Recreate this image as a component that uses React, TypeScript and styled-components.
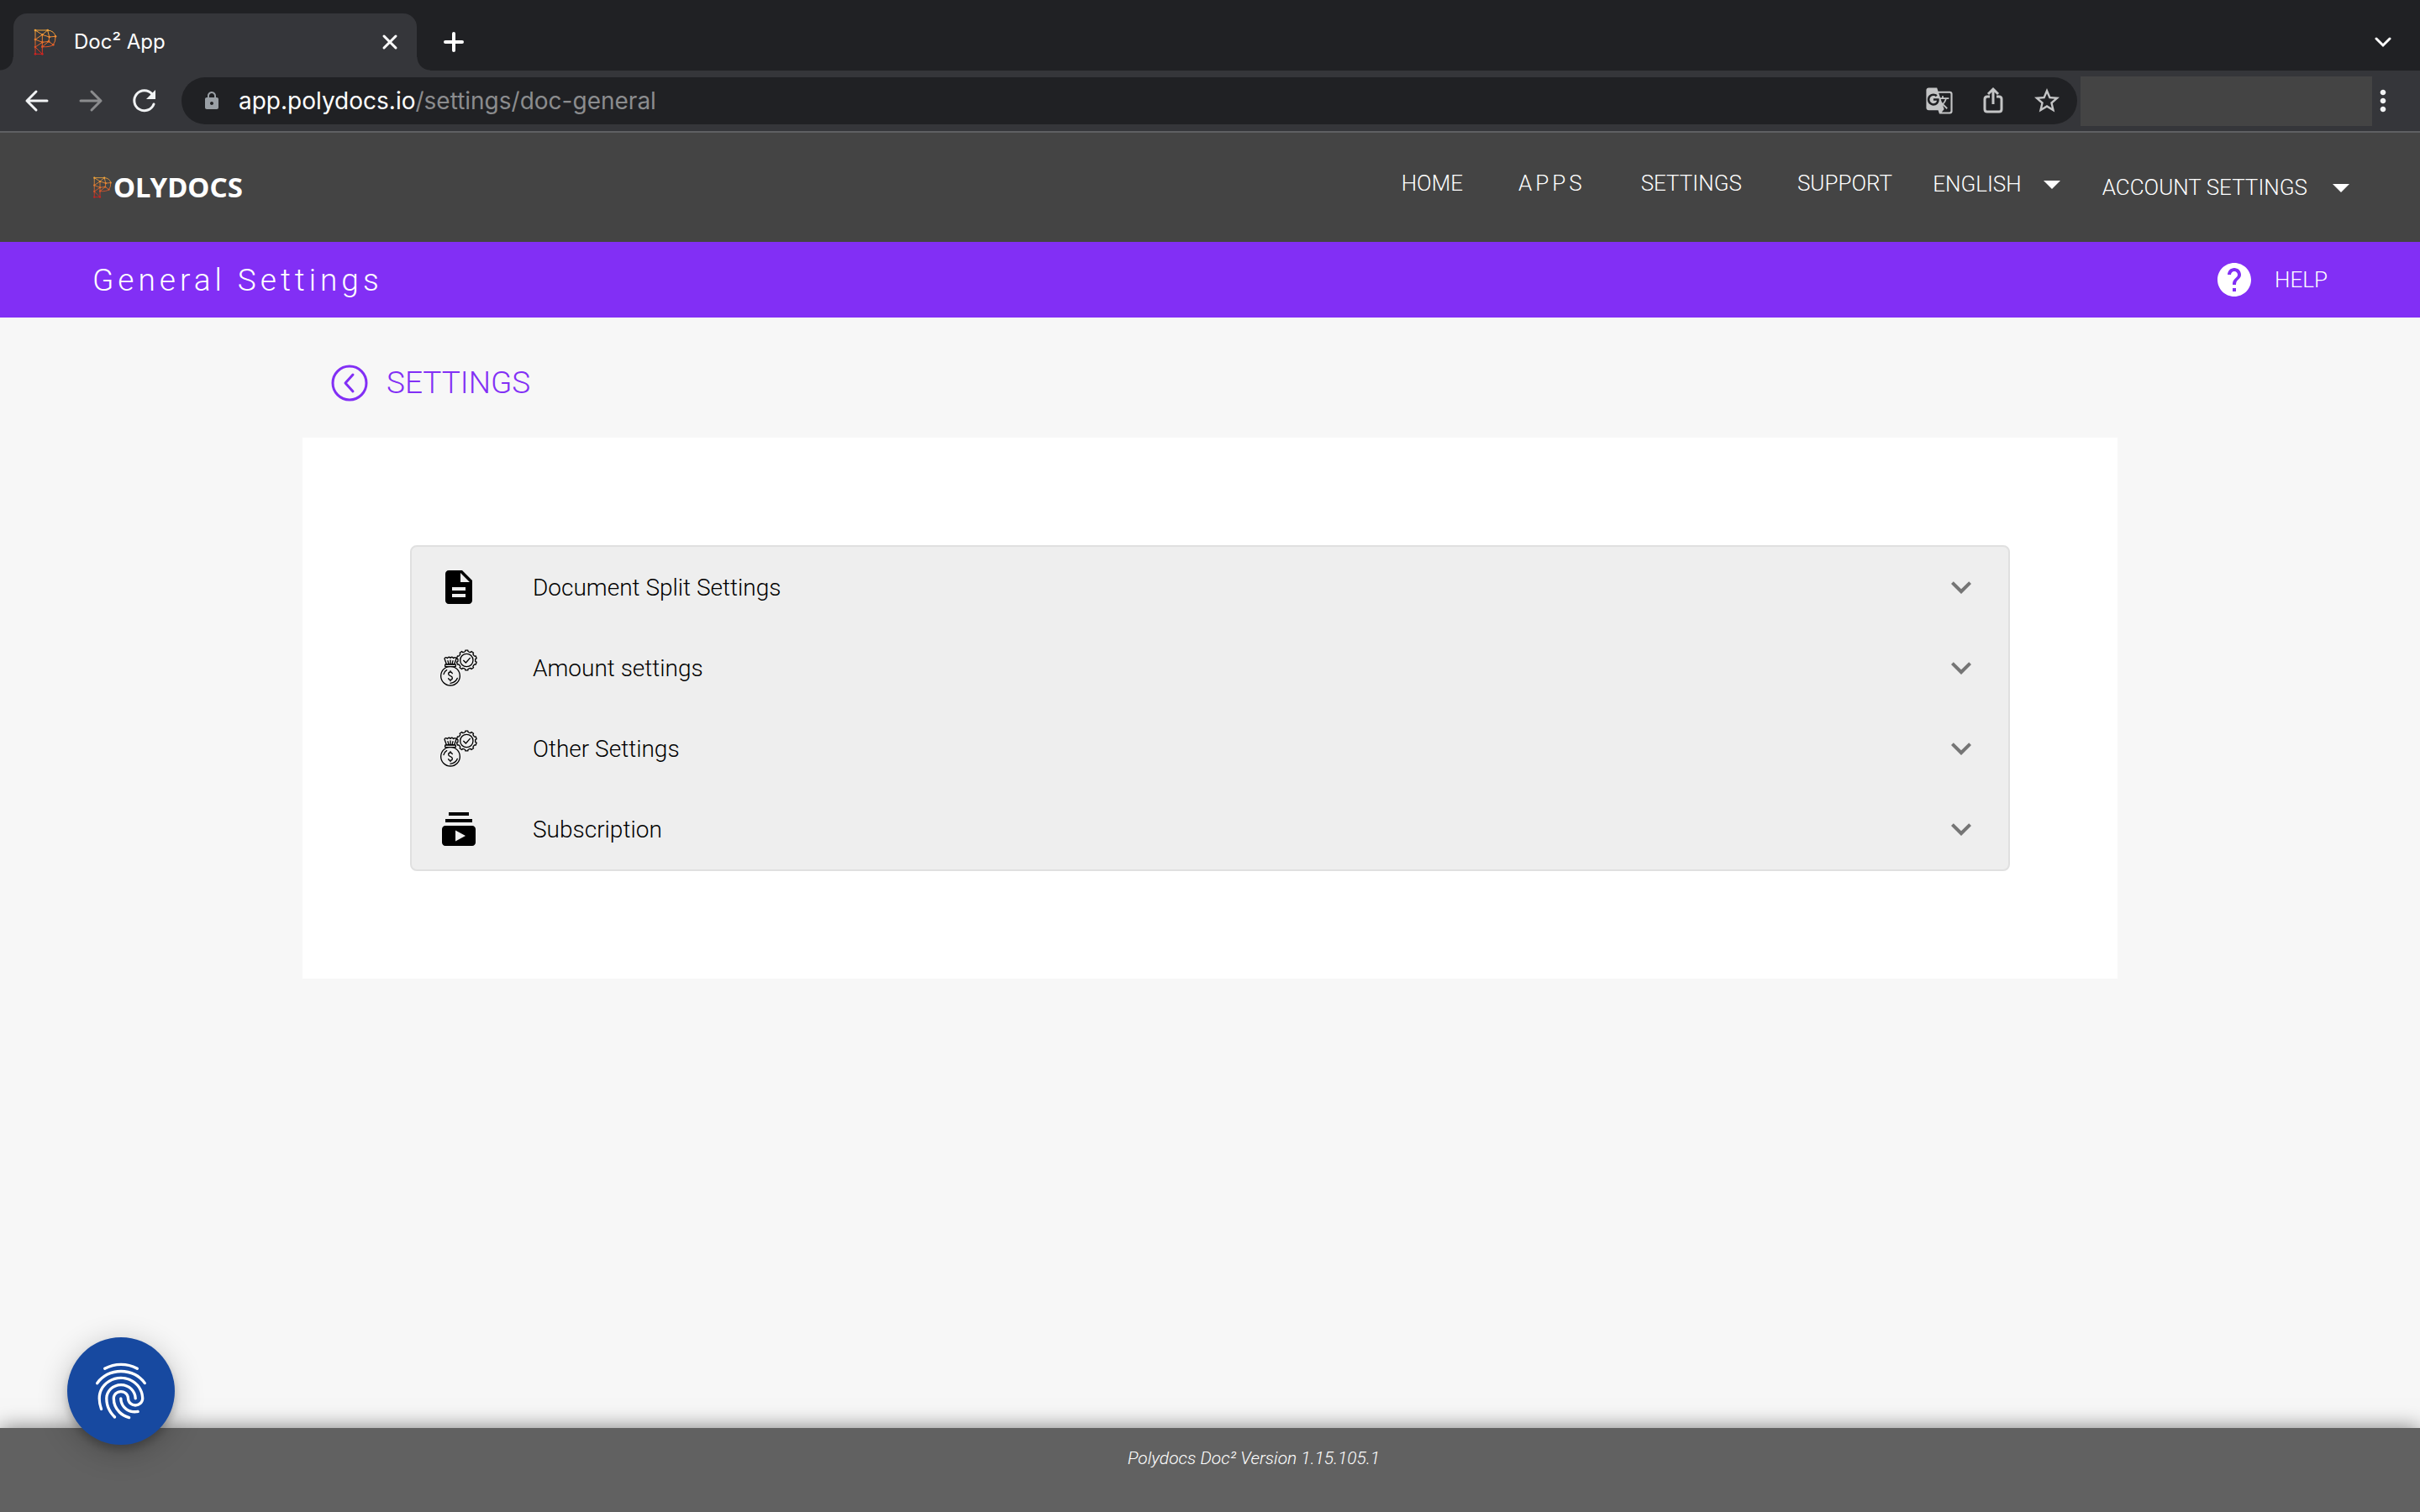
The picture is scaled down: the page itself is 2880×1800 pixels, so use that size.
import React from "react";
import styled, { createGlobalStyle } from "styled-components";
import {
  MdArrowDropDown,
  MdDescription,
  MdExpandMore,
  MdFingerprint,
  MdGTranslate,
  MdHelp,
  MdLock,
  MdMoreVert,
  MdStarBorder,
  MdSubscriptions,
} from "react-icons/md";

const uiFont = '"Inter", "Liberation Sans", sans-serif';
const brandFont = '"Noto Sans", "Open Sans", sans-serif';
const bodyFont = '"Roboto", "Liberation Sans", sans-serif';

const GlobalStyle = createGlobalStyle`
  *, *::before, *::after { box-sizing: border-box; }
  body { margin: 0; background: #f7f7f7; font-family: ${bodyFont}; }
  button { margin: 0; padding: 0; border: 0; background: none; color: inherit; font: inherit; cursor: pointer; }
  a { color: inherit; text-decoration: none; }
  h1, h2, p, ul { margin: 0; padding: 0; font-weight: inherit; }
  ul { list-style: none; }
  svg { display: block; flex: none; }
`;

const Page = styled.div`
  min-height: 100vh;
  display: flex;
  flex-direction: column;
`;

/* Browser frame */

const TabStrip = styled.div`
  height: 84px;
  padding: 16px 16px 0;
  display: flex;
  align-items: stretch;
  background: #202124;
  color: #fff;
  font-family: ${uiFont};
`;

const Tab = styled.div`
  position: relative;
  width: 480px;
  padding: 0 22px 0 24px;
  display: flex;
  align-items: center;
  border-radius: 16px 16px 0 0;
  background: #35363a;
  font-size: 24px;
  line-height: 32px;

  &::before,
  &::after {
    content: "";
    position: absolute;
    bottom: 0;
    width: 16px;
    height: 16px;
  }
  &::before {
    right: 100%;
    background: radial-gradient(circle at 0 0, transparent 15px, #35363a 16px);
  }
  &::after {
    left: 100%;
    background: radial-gradient(circle at 100% 0, transparent 15px, #35363a 16px);
  }
`;

const TabTitle = styled.span`
  flex: 1;
  margin-left: 20px;
`;

const StripButton = styled.button<{ $end?: boolean }>`
  display: flex;
  align-items: center;
  margin-left: ${(p) => (p.$end ? "auto" : "30px")};
  padding-right: ${(p) => (p.$end ? "18px" : "0")};
`;

const Toolbar = styled.div`
  height: 74px;
  padding: 0 31px 0 28px;
  display: flex;
  align-items: center;
  background: #35363a;
  border-bottom: 2px solid #5f6063;
  color: #f1f3f4;
  font-family: ${uiFont};
`;

const HistoryButtons = styled.div`
  display: flex;
  gap: 32px;
  margin-right: 28px;
`;

const AddressBar = styled.div`
  flex: 1;
  height: 56px;
  padding: 0 18px 0 24px;
  display: flex;
  align-items: center;
  border-radius: 28px;
  background: #202124;
  color: #9aa0a6;
`;

const Address = styled.span`
  flex: 1;
  margin-left: 20px;
  color: #8b8c8e;
  font-size: 28px;
  line-height: 36px;
  b {
    color: #fff;
    font-weight: 400;
  }
`;

const AddressActions = styled.div`
  display: flex;
  gap: 28px;
  color: #c4c5c6;
`;

const AddressAction = styled.button`
  width: 36px;
  height: 36px;
  display: flex;
  align-items: center;
  justify-content: center;
`;

const ExtensionArea = styled.div`
  width: 347px;
  height: 59px;
  margin-left: 4px;
  background: #444;
`;

const MenuButton = styled.button`
  width: 26px;
  display: flex;
  justify-content: center;
`;

/* Site header */

const Header = styled.header`
  height: 130px;
  padding: 0 70px 0 110px;
  display: flex;
  align-items: center;
  justify-content: space-between;
  background: #444;
  color: #fff;
`;

const Brand = styled.a`
  display: flex;
  align-items: center;
  gap: 1px;
  font-family: ${brandFont};
  font-size: 33px;
  font-weight: 700;
  line-height: 40px;
`;

const Nav = styled.nav`
  display: flex;
  align-items: center;
  font-size: 26px;
  font-weight: 300;
  line-height: 32px;
`;

const NavLinks = styled.ul`
  display: flex;
  gap: 66px;
  margin-right: 48px;
  padding-bottom: 10px;
`;

const NavLink = styled.a<{ $spaced?: boolean }>`
  letter-spacing: ${(p) => (p.$spaced ? "4px" : "normal")};
`;

const NavMenu = styled.button<{ $raised?: boolean }>`
  display: flex;
  align-items: center;
  gap: ${(p) => (p.$raised ? "12px" : "16px")};
  margin-right: ${(p) => (p.$raised ? "36px" : "0")};
  padding-bottom: ${(p) => (p.$raised ? "8px" : "0")};
`;

const TitleBar = styled.div`
  height: 90px;
  padding: 0 110px;
  display: flex;
  align-items: center;
  justify-content: space-between;
  background: #822ff5;
  color: #fff;
  font-weight: 300;
`;

const Title = styled.h1`
  padding-top: 2px;
  font-size: 37px;
  letter-spacing: 5px;
  line-height: 48px;
`;

const HelpLink = styled.a`
  display: flex;
  align-items: center;
  gap: 24px;
  font-size: 26px;
  line-height: 32px;
`;

/* Settings */

const Main = styled.main`
  flex: 1;
  width: 75%;
  margin: 0 auto;
`;

const BackLink = styled.a`
  height: 143px;
  padding: 12px 32px 0;
  display: flex;
  align-items: center;
  gap: 20px;
  color: #822ff5;
  font-size: 37px;
  font-weight: 300;
  line-height: 48px;
`;

const Card = styled.section`
  padding: 128px;
  background: #fff;
`;

const SettingsList = styled.ul`
  border: 2px solid #e0e0e0;
  border-radius: 8px;
  background: #eee;
`;

const SettingsRow = styled.button`
  width: 100%;
  height: 96px;
  padding: 0 32px;
  display: flex;
  align-items: center;
  font-size: 28px;
  font-weight: 300;
  line-height: 36px;
  text-align: left;
  color: #000;
`;

const RowLabel = styled.span`
  flex: 1;
  margin-left: 64px;
  padding-top: 2px;
`;

const RowChevron = styled(MdExpandMore)`
  color: #757575;
`;

/* Footer */

const Footer = styled.footer`
  height: 100px;
  padding: 20px 0 0 104px;
  background: #616161;
  box-shadow: 0 0 24px rgba(0, 0, 0, 0.5);
  color: #fff;
  font-size: 21px;
  font-style: italic;
  font-weight: 300;
  line-height: 32px;
  text-align: center;
`;

const FingerprintButton = styled.button`
  position: fixed;
  left: 80px;
  bottom: 80px;
  width: 128px;
  height: 128px;
  display: flex;
  align-items: center;
  justify-content: center;
  border-radius: 50%;
  background: #1749a0;
  box-shadow: 0 6px 10px rgba(0, 0, 0, 0.2), 0 8px 36px rgba(0, 0, 0, 0.24);
  color: #fff;
`;

/* Drawings */

const meshNodes = [
  [36, 36], [80, 36], [61, 52], [108, 58], [86, 60], [36, 69], [84, 76],
  [61, 79], [100, 88], [61, 95], [36, 96], [36, 121], [61, 121],
];

const MeshP = ({ width, height }: { width: number; height: number }) => (
  <svg width={width} height={height} viewBox="30 30 84 96" fill="none" aria-hidden="true">
    <defs>
      <linearGradient id="ember" x1="0" y1="34" x2="0" y2="122" gradientUnits="userSpaceOnUse">
        <stop offset="0" stopColor="#f5a83c" />
        <stop offset="0.5" stopColor="#e8732c" />
        <stop offset="1" stopColor="#d01f1f" />
      </linearGradient>
    </defs>
    <path
      stroke="url(#ember)"
      strokeWidth="3"
      d="M36 121V36H80Q104 38 108 58Q109 76 100 88Q88 97 61 95M36 36L61 52L80 36L86 60L108 58M61 52L86 60L84 76L100 88M84 76L61 79L36 69L61 52V121H36M61 95L84 76M61 79L36 96L61 121"
    />
    <g fill="url(#ember)">
      {meshNodes.map(([x, y]) => (
        <circle key={`${x}-${y}`} cx={x} cy={y} r="4" />
      ))}
    </g>
  </svg>
);

const CloseIcon = () => (
  <svg width="20" height="20" viewBox="0 0 20 20" stroke="currentColor" strokeWidth="3" strokeLinecap="round">
    <path d="M3 3L17 17M17 3L3 17" />
  </svg>
);

const PlusIcon = () => (
  <svg width="28" height="28" viewBox="0 0 28 28" stroke="currentColor" strokeWidth="4" strokeLinecap="round">
    <path d="M14 4V24M4 14H24" />
  </svg>
);

const TabListIcon = () => (
  <svg width="20" height="20" viewBox="0 0 20 20" fill="none" stroke="currentColor" strokeWidth="3" strokeLinecap="round">
    <path d="M2 6L10 14L18 6" />
  </svg>
);

const ArrowIcon = ({ forward }: { forward?: boolean }) => (
  <svg
    width="32"
    height="32"
    viewBox="0 0 32 32"
    fill="none"
    stroke={forward ? "#8b8c8e" : "currentColor"}
    strokeWidth="3"
    strokeLinecap="round"
    strokeLinejoin="round"
  >
    <path d={forward ? "M4 16H28M17 5L28 16L17 27" : "M28 16H4M15 5L4 16L15 27"} />
  </svg>
);

const ReloadIcon = () => (
  <svg width="32" height="32" viewBox="0 0 32 32" fill="none" stroke="currentColor" strokeWidth="3" strokeLinecap="round">
    <path d="M27 20A12 12 0 1 1 25 8" />
    <path d="M29 3V14H18Z" fill="currentColor" stroke="none" />
  </svg>
);

const ShareIcon = () => (
  <svg width="36" height="36" viewBox="0 0 36 36" fill="none" stroke="currentColor" strokeWidth="3">
    <path d="M14 13H11Q8 13 8 16V28Q8 31 11 31H25Q28 31 28 28V16Q28 13 25 13H22M18 22V5M12 10L18 4L24 10" />
  </svg>
);

const BackCircleIcon = () => (
  <svg
    width="48"
    height="48"
    viewBox="0 0 48 48"
    fill="none"
    stroke="currentColor"
    strokeWidth="3"
    strokeLinecap="round"
    strokeLinejoin="round"
  >
    <circle cx="24" cy="24" r="20" />
    <path d="M28 14L19 24L28 34" />
  </svg>
);

const gearPath = (() => {
  const points: string[] = [];
  const teeth = 10;
  for (let i = 0; i < teeth; i += 1) {
    [
      [-0.42, 31],
      [-0.25, 32],
      [-0.2, 36],
      [0.2, 36],
      [0.25, 32],
      [0.42, 31],
    ].forEach(([step, radius]) => {
      const angle = ((i + step) / teeth) * Math.PI * 2 - Math.PI / 2;
      points.push(`${(94 + radius * Math.cos(angle)).toFixed(1)} ${(40 + radius * Math.sin(angle)).toFixed(1)}`);
    });
  }
  return `M${points.join("L")}Z`;
})();

const MoneyBagIcon = () => (
  <svg
    width="48"
    height="48"
    viewBox="-6 -5 144 144"
    fill="none"
    stroke="#000"
    strokeWidth="4"
    strokeLinecap="round"
    strokeLinejoin="round"
  >
    <path d={gearPath} />
    <circle cx="94" cy="40" r="23" />
    <path d="M83 41L91 49L106 32" />
    <g fill="#eee">
      <circle cx="36" cy="96" r="34" />
      <path d="M22 54L15 34Q19 26 25 33Q31 25 36 32Q42 25 47 33Q54 26 57 34L50 54Z" />
      <rect x="17" y="55" width="38" height="8" rx="2" />
    </g>
    <path d="M27 42L30 54M36 40V54M45 42L42 54M43 87Q41 82 36 82Q29 82 29 89Q29 94 36 96Q43 98 43 103Q43 110 36 110Q30 110 29 105M36 78V82M36 110V114M12 90Q15 79 23 75M36 122Q55 120 61 104" />
  </svg>
);

const rows = [
  { label: "Document Split Settings", icon: <MdDescription size={48} /> },
  { label: "Amount settings", icon: <MoneyBagIcon /> },
  { label: "Other Settings", icon: <MoneyBagIcon /> },
  { label: "Subscription", icon: <MdSubscriptions size={48} /> },
];

const links = ["HOME", "APPS", "SETTINGS", "SUPPORT"];

export default function App() {
  return (
    <Page>
      <GlobalStyle />
      <TabStrip>
        <Tab>
          <MeshP width={28} height={32} />
          <TabTitle>Doc² App</TabTitle>
          <button aria-label="Close tab">
            <CloseIcon />
          </button>
        </Tab>
        <StripButton aria-label="New tab">
          <PlusIcon />
        </StripButton>
        <StripButton $end aria-label="Search tabs">
          <TabListIcon />
        </StripButton>
      </TabStrip>
      <Toolbar>
        <HistoryButtons>
          <button aria-label="Back">
            <ArrowIcon />
          </button>
          <button aria-label="Forward">
            <ArrowIcon forward />
          </button>
          <button aria-label="Reload">
            <ReloadIcon />
          </button>
        </HistoryButtons>
        <AddressBar>
          <MdLock size={24} />
          <Address>
            <b>app.polydocs.io</b>/settings/doc-general
          </Address>
          <AddressActions>
            <AddressAction aria-label="Translate this page">
              <MdGTranslate size={34} />
            </AddressAction>
            <AddressAction aria-label="Share this page">
              <ShareIcon />
            </AddressAction>
            <AddressAction aria-label="Bookmark this tab">
              <MdStarBorder size={36} />
            </AddressAction>
          </AddressActions>
        </AddressBar>
        <ExtensionArea />
        <MenuButton aria-label="Browser menu">
          <MdMoreVert size={40} />
        </MenuButton>
      </Toolbar>

      <Header>
        <Brand href="#home" aria-label="Polydocs">
          <MeshP width={24} height={26} />
          OLYDOCS
        </Brand>
        <Nav>
          <NavLinks>
            {links.map((link) => (
              <li key={link}>
                <NavLink href={`#${link.toLowerCase()}`} $spaced={link === "APPS"}>
                  {link}
                </NavLink>
              </li>
            ))}
          </NavLinks>
          <NavMenu $raised aria-haspopup="menu">
            ENGLISH
            <MdArrowDropDown size={48} />
          </NavMenu>
          <NavMenu aria-haspopup="menu">
            ACCOUNT SETTINGS
            <MdArrowDropDown size={48} />
          </NavMenu>
        </Nav>
      </Header>
      <TitleBar>
        <Title>General Settings</Title>
        <HelpLink href="#help">
          <MdHelp size={48} />
          HELP
        </HelpLink>
      </TitleBar>

      <Main>
        <BackLink href="#settings">
          <BackCircleIcon />
          SETTINGS
        </BackLink>
        <Card>
          <SettingsList>
            {rows.map((row) => (
              <li key={row.label}>
                <SettingsRow aria-expanded="false">
                  {row.icon}
                  <RowLabel>{row.label}</RowLabel>
                  <RowChevron size={48} />
                </SettingsRow>
              </li>
            ))}
          </SettingsList>
        </Card>
      </Main>

      <Footer>Polydocs Doc² Version 1.15.105.1</Footer>
      <FingerprintButton aria-label="Privacy settings">
        <MdFingerprint size={80} />
      </FingerprintButton>
    </Page>
  );
}
